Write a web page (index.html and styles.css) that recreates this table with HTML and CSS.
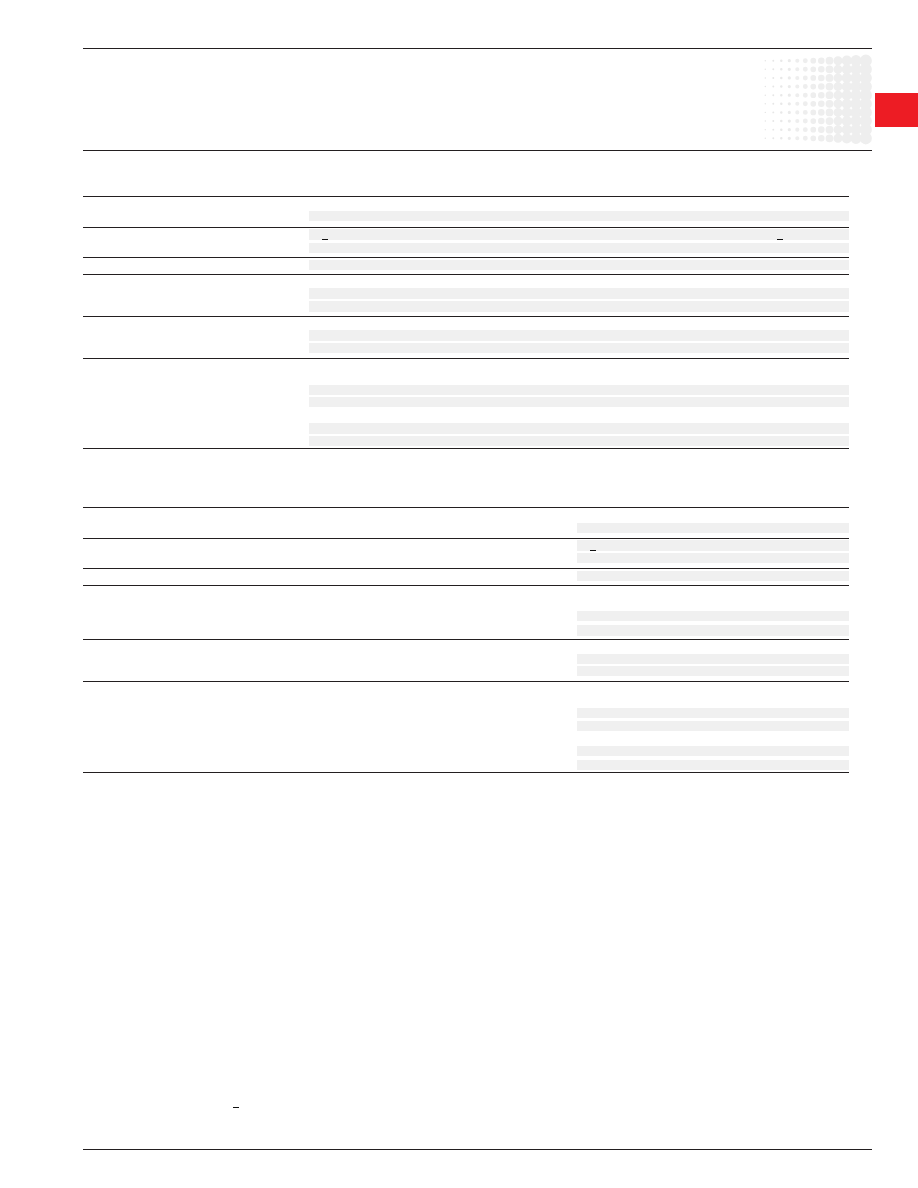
FILE: index.html
```html
<!DOCTYPE html>
<html lang="en">
<head>
<meta charset="utf-8">
<title>Specifications</title>
<link rel="stylesheet" href="styles.css">
</head>
<body>
<div class="tab"></div>
<div class="page">
  <header class="header">
    <svg class="halftone" width="110" height="95" viewBox="0 0 110 95" aria-hidden="true">
      <g stroke="#eeeeee" stroke-linecap="round" stroke-dasharray="0 8.62">
        <line x1="2.3" y1="7.7" x2="2.3" y2="86" stroke-width="1.4" stroke="#e4e4e4"/>
        <line x1="10.3" y1="7.7" x2="10.3" y2="86" stroke-width="1.9" stroke="#e6e6e6"/>
        <line x1="18.3" y1="7.7" x2="18.3" y2="86" stroke-width="2.5" stroke="#e8e8e8"/>
        <line x1="26.3" y1="7.7" x2="26.3" y2="86" stroke-width="3.2" stroke="#eaeaea"/>
        <line x1="34.3" y1="7.7" x2="34.3" y2="86" stroke-width="4.1"/>
        <line x1="42.3" y1="7.7" x2="42.3" y2="86" stroke-width="4.9"/>
        <line x1="50.3" y1="7.7" x2="50.3" y2="86" stroke-width="5.7"/>
        <line x1="58.3" y1="7.7" x2="58.3" y2="86" stroke-width="6.6"/>
        <line x1="66.5" y1="7.7" x2="66.5" y2="86" stroke-width="7.8"/>
        <line x1="75" y1="7.7" x2="75" y2="86" stroke-width="9"/>
        <line x1="83.8" y1="7.7" x2="83.8" y2="86" stroke-width="10.2"/>
        <line x1="93" y1="7.7" x2="93" y2="86" stroke-width="11.2"/>
        <line x1="102.8" y1="7.7" x2="102.8" y2="86" stroke-width="12.2"/>
      </g>
    </svg>
  </header>

  <section class="spec spec-one">
    <div class="row r1"><div class="label"></div><div class="vals"><div class="bar"></div></div></div>
    <div class="row r2"><div class="label"></div><div class="vals"><div class="bar b11 marks"><span class="dash d-first"></span><span class="dash d-second"></span></div><div class="bar g3"></div></div></div>
    <div class="row r3"><div class="label"></div><div class="vals"><div class="bar"></div></div></div>
    <div class="row r4"><div class="label"></div><div class="vals"><div class="bar b11"></div><div class="bar b11 g2"></div></div></div>
    <div class="row r5"><div class="label"></div><div class="vals"><div class="bar b11"></div><div class="bar g2"></div></div></div>
    <div class="row r6"><div class="label"></div><div class="vals"><div class="bar"></div><div class="bar g2"></div><div class="bar b11 g16"></div><div class="bar g2"></div></div></div>
  </section>

  <section class="spec spec-two">
    <div class="row s1"><div class="label"></div><div class="vals"><div class="bar"></div></div></div>
    <div class="row s2"><div class="label"></div><div class="vals"><div class="bar b11 marks"><span class="dash d-first"></span></div><div class="bar g2"></div></div></div>
    <div class="row s3"><div class="label"></div><div class="vals"><div class="bar"></div></div></div>
    <div class="row s4"><div class="label"></div><div class="vals"><div class="bar"></div><div class="bar b11 g4"></div></div></div>
    <div class="row s5"><div class="label"></div><div class="vals"><div class="bar"></div><div class="bar g2"></div></div></div>
    <div class="row s6"><div class="label"></div><div class="vals"><div class="bar"></div><div class="bar g3"></div><div class="bar g15"></div><div class="bar g4"></div></div></div>
  </section>

  <footer class="footer">
    <div class="note"><span class="dash"></span></div>
  </footer>
</div>
</body>
</html>
```

FILE: styles.css
```css
html, body {
  margin: 0;
  padding: 0;
  background: #ffffff;
  font-family: "Liberation Sans", Arial, sans-serif;
}

.page {
  width: 789px;
  margin-left: 83px;
  padding-top: 48px;
}

.tab {
  position: absolute;
  left: 875px;
  top: 93px;
  width: 43px;
  height: 34px;
  background: #ed1c24;
}

.header {
  border-top: 1px solid #231f20;
  border-bottom: 1px solid #231f20;
  display: flex;
  justify-content: flex-end;
  align-items: flex-start;
  padding-top: 4px;
  height: 97px;
}

.halftone {
  display: block;
  margin-right: -1px;
}

.spec {
  width: 766px;
  border-bottom: 1px solid #231f20;
}

.spec-one {
  margin-top: 45px;
}

.spec-two {
  margin-top: 58px;
}

.row {
  display: grid;
  border-top: 1px solid #231f20;
}

.spec-one .row {
  grid-template-columns: 226px 1fr;
}

.spec-two .row {
  grid-template-columns: 494px 1fr;
}

.vals {
  display: flex;
  flex-direction: column;
}

.bar {
  height: 10px;
  background: #f0f0f0;
}

.bar.b11 {
  height: 11px;
}

.g2 { margin-top: 2px; }
.g3 { margin-top: 3px; }
.g4 { margin-top: 4px; }
.g15 { margin-top: 15px; }
.g16 { margin-top: 16px; }

.marks {
  display: flex;
  align-items: flex-end;
}

.dash {
  display: block;
  width: 6px;
  height: 1px;
  background: #111111;
}

.marks .d-first {
  margin-left: 13px;
}

.marks .d-second {
  margin-left: 449px;
}

/* table one row spacing */
.r1 .vals { padding: 14px 0 6px; }
.r2 .vals { padding: 1px 0 4px; }
.r3 .vals { padding: 2px 0 4px; }
.r4 .vals { padding: 13px 0 4px; }
.r5 .vals { padding: 13px 0 5px; }
.r6 .vals { padding: 26px 0 2px; }

/* table two row spacing */
.s1 .vals { padding: 15px 0 5px; }
.s2 .vals { padding: 1px 0 5px; }
.s3 .vals { padding: 2px 0 4px; }
.s4 .vals { padding: 25px 0 3px; }
.s5 .vals { padding: 14px 0 5px; }
.s6 .vals { padding: 26px 0 2px; }

.footer {
  border-bottom: 1px solid #231f20;
  padding-top: 334px;
  padding-bottom: 41px;
}

.note {
  padding-left: 150px;
}
```
